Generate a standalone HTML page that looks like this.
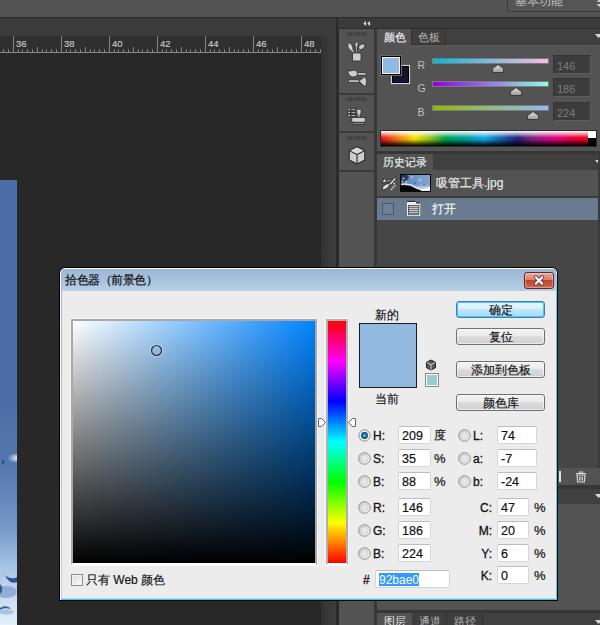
<!DOCTYPE html>
<html><head><meta charset="utf-8">
<style>
*{margin:0;padding:0;box-sizing:border-box}
html,body{width:600px;height:625px;overflow:hidden;background:#282828;font-family:"Liberation Sans",sans-serif;}
.a{position:absolute}
.t{white-space:nowrap;line-height:1}
.d{-webkit-text-stroke:0.25px currentColor}
</style></head><body>
<div class="a" style="left:0;top:0;width:600px;height:625px;overflow:hidden">

<div class="a" style="left:0px;top:0px;width:600px;height:17px;background:#535353"></div>
<div class="a" style="left:0px;top:17px;width:600px;height:1px;background:#2a2a2a"></div>
<div class="a" style="left:507px;top:-3px;width:100px;height:15px;background:#555555;border:1px solid #3a3a3a;border-radius:0 0 0 3px"></div>
<div class="a t" style="left:515px;top:-4px;font-size:11.5px;color:#c0c0c0">基本功能</div>
<svg class="a" style="left:596px;top:-2px" width="8" height="10"><path d="M0.5 4L3.5 1L6.5 4Z M0.5 6L3.5 9L6.5 6Z" fill="#cccccc"/></svg>
<div class="a" style="left:0px;top:18px;width:336px;height:18px;background:#3b3b3b"></div>
<div class="a" style="left:0px;top:36px;width:321px;height:17px;background:#2f2f2f"></div>
<svg class="a" style="left:0;top:36px" width="321" height="17"><rect x="3" y="13.3" width="1" height="3" fill="#858585"/><rect x="8" y="13.3" width="1" height="3" fill="#858585"/><rect x="13" y="0.5" width="1" height="16" fill="#858585"/><rect x="18" y="13.3" width="1" height="3" fill="#858585"/><rect x="22" y="13.3" width="1" height="3" fill="#858585"/><rect x="27" y="13.3" width="1" height="3" fill="#858585"/><rect x="32" y="13.3" width="1" height="3" fill="#858585"/><rect x="37" y="11" width="1" height="5" fill="#858585"/><rect x="42" y="13.3" width="1" height="3" fill="#858585"/><rect x="46" y="13.3" width="1" height="3" fill="#858585"/><rect x="51" y="13.3" width="1" height="3" fill="#858585"/><rect x="56" y="13.3" width="1" height="3" fill="#858585"/><rect x="61" y="0.5" width="1" height="16" fill="#858585"/><rect x="66" y="13.3" width="1" height="3" fill="#858585"/><rect x="70" y="13.3" width="1" height="3" fill="#858585"/><rect x="75" y="13.3" width="1" height="3" fill="#858585"/><rect x="80" y="13.3" width="1" height="3" fill="#858585"/><rect x="85" y="11" width="1" height="5" fill="#858585"/><rect x="90" y="13.3" width="1" height="3" fill="#858585"/><rect x="94" y="13.3" width="1" height="3" fill="#858585"/><rect x="99" y="13.3" width="1" height="3" fill="#858585"/><rect x="104" y="13.3" width="1" height="3" fill="#858585"/><rect x="109" y="0.5" width="1" height="16" fill="#858585"/><rect x="114" y="13.3" width="1" height="3" fill="#858585"/><rect x="118" y="13.3" width="1" height="3" fill="#858585"/><rect x="123" y="13.3" width="1" height="3" fill="#858585"/><rect x="128" y="13.3" width="1" height="3" fill="#858585"/><rect x="133" y="11" width="1" height="5" fill="#858585"/><rect x="138" y="13.3" width="1" height="3" fill="#858585"/><rect x="142" y="13.3" width="1" height="3" fill="#858585"/><rect x="147" y="13.3" width="1" height="3" fill="#858585"/><rect x="152" y="13.3" width="1" height="3" fill="#858585"/><rect x="157" y="0.5" width="1" height="16" fill="#858585"/><rect x="162" y="13.3" width="1" height="3" fill="#858585"/><rect x="166" y="13.3" width="1" height="3" fill="#858585"/><rect x="171" y="13.3" width="1" height="3" fill="#858585"/><rect x="176" y="13.3" width="1" height="3" fill="#858585"/><rect x="181" y="11" width="1" height="5" fill="#858585"/><rect x="186" y="13.3" width="1" height="3" fill="#858585"/><rect x="190" y="13.3" width="1" height="3" fill="#858585"/><rect x="195" y="13.3" width="1" height="3" fill="#858585"/><rect x="200" y="13.3" width="1" height="3" fill="#858585"/><rect x="205" y="0.5" width="1" height="16" fill="#858585"/><rect x="210" y="13.3" width="1" height="3" fill="#858585"/><rect x="214" y="13.3" width="1" height="3" fill="#858585"/><rect x="219" y="13.3" width="1" height="3" fill="#858585"/><rect x="224" y="13.3" width="1" height="3" fill="#858585"/><rect x="229" y="11" width="1" height="5" fill="#858585"/><rect x="234" y="13.3" width="1" height="3" fill="#858585"/><rect x="238" y="13.3" width="1" height="3" fill="#858585"/><rect x="243" y="13.3" width="1" height="3" fill="#858585"/><rect x="248" y="13.3" width="1" height="3" fill="#858585"/><rect x="253" y="0.5" width="1" height="16" fill="#858585"/><rect x="258" y="13.3" width="1" height="3" fill="#858585"/><rect x="262" y="13.3" width="1" height="3" fill="#858585"/><rect x="267" y="13.3" width="1" height="3" fill="#858585"/><rect x="272" y="13.3" width="1" height="3" fill="#858585"/><rect x="277" y="11" width="1" height="5" fill="#858585"/><rect x="282" y="13.3" width="1" height="3" fill="#858585"/><rect x="286" y="13.3" width="1" height="3" fill="#858585"/><rect x="291" y="13.3" width="1" height="3" fill="#858585"/><rect x="296" y="13.3" width="1" height="3" fill="#858585"/><rect x="301" y="0.5" width="1" height="16" fill="#858585"/><rect x="306" y="13.3" width="1" height="3" fill="#858585"/><rect x="310" y="13.3" width="1" height="3" fill="#858585"/><rect x="315" y="13.3" width="1" height="3" fill="#858585"/><rect x="320" y="13.3" width="1" height="3" fill="#858585"/><rect x="0" y="16" width="321" height="1" fill="#858585"/></svg>
<div class="a t" style="left:16px;top:38.5px;font-size:9.5px;color:#cacaca;-webkit-text-stroke:0.15px #cacaca">36</div>
<div class="a t" style="left:64px;top:38.5px;font-size:9.5px;color:#cacaca;-webkit-text-stroke:0.15px #cacaca">38</div>
<div class="a t" style="left:112px;top:38.5px;font-size:9.5px;color:#cacaca;-webkit-text-stroke:0.15px #cacaca">40</div>
<div class="a t" style="left:160px;top:38.5px;font-size:9.5px;color:#cacaca;-webkit-text-stroke:0.15px #cacaca">42</div>
<div class="a t" style="left:208px;top:38.5px;font-size:9.5px;color:#cacaca;-webkit-text-stroke:0.15px #cacaca">44</div>
<div class="a t" style="left:256px;top:38.5px;font-size:9.5px;color:#cacaca;-webkit-text-stroke:0.15px #cacaca">46</div>
<div class="a t" style="left:304px;top:38.5px;font-size:9.5px;color:#cacaca;-webkit-text-stroke:0.15px #cacaca">48</div>
<div class="a" style="left:321px;top:36px;width:15px;height:589px;background:linear-gradient(90deg,#323232,#3e3e3e)"></div>
<div class="a" style="left:336px;top:18px;width:3px;height:607px;background:#2a2a2a"></div>
<svg class="a" style="left:0;top:180px" width="17" height="445"><defs><linearGradient id="cv" x1="0" y1="0" x2="0" y2="1"><stop offset="0" stop-color="#4a6fa8"/><stop offset="0.5" stop-color="#4a6fa8"/><stop offset="0.65" stop-color="#5479b0"/><stop offset="0.78" stop-color="#7498c8"/><stop offset="0.86" stop-color="#a0c0e4"/><stop offset="0.93" stop-color="#c4daf0"/><stop offset="1" stop-color="#e4f0fa"/></linearGradient><radialGradient id="hl" cx="0.8" cy="0.5" r="0.6"><stop offset="0" stop-color="#ffffff"/><stop offset="1" stop-color="#ffffff" stop-opacity="0"/></radialGradient></defs><rect width="17" height="445" fill="url(#cv)"/><ellipse cx="13" cy="278" rx="9" ry="4.5" fill="url(#hl)"/><path d="M2 279L5 282L2 285Z" fill="#20345a" opacity="0.6"/><path d="M5 395C9 399 14 399 17 397V402C13 404 8 402 5 395Z" fill="#1c3a8c" opacity="0.85"/><ellipse cx="6" cy="412" rx="11" ry="6" fill="#6f93c4" opacity="0.6"/><path d="M0 404C3 406 3 412 0 414Z" fill="#24427a" opacity="0.8"/><path d="M0 428C4 425 9 426 11 429C7 428 3 428 0 430Z" fill="#1c3a8c" opacity="0.8"/><ellipse cx="6" cy="432" rx="8" ry="2.5" fill="#7e9fcc" opacity="0.5"/></svg>
<div class="a" style="left:338px;top:18px;width:262px;height:10px;background:#3b3b3b"></div>
<div class="a" style="left:338px;top:28px;width:262px;height:1px;background:#2c2c2c"></div>
<svg class="a" style="left:360px;top:18px" width="14" height="10"><path d="M6.5 2L2.8 5.5L6.5 9Z M10.5 2L6.8 5.5L10.5 9Z" fill="#dadada" stroke="#1e1e1e" stroke-width="0.7" stroke-linejoin="round"/></svg>
<div class="a" style="left:339px;top:29px;width:35px;height:596px;background:#535353"></div>
<div class="a" style="left:374px;top:29px;width:3px;height:596px;background:#383838"></div>
<div class="a" style="left:377px;top:29px;width:223px;height:596px;background:#535353"></div>
<div class="a" style="left:377px;top:29px;width:223px;height:16px;background:#404040"></div>
<div class="a" style="left:377px;top:45px;width:223px;height:1px;background:#5a5a5a"></div>
<div class="a" style="left:377px;top:29px;width:34px;height:17px;background:#535353"></div>
<div class="a t" style="left:384px;top:32px;font-size:11px;color:#f0f0f0;-webkit-text-stroke:0.15px #f0f0f0">颜色</div>
<div class="a" style="left:411px;top:29px;width:35px;height:16px;background:#3e3e3e;border:1px solid #323232;border-top:none"></div>
<div class="a t" style="left:418px;top:32px;font-size:11px;color:#b4b4b4">色板</div>
<svg class="a" style="left:595px;top:34px" width="8" height="5"><path d="M0 0H7L3.5 4Z" fill="#d8d8d8"/></svg>
<div class="a" style="left:391px;top:65px;width:19px;height:19px;background:#15142a;border:1px solid #d8d8d8;box-shadow:inset 0 0 0 1px #000,0 0 0 1px #5e5e5e"></div>
<div class="a" style="left:380px;top:55px;width:22px;height:21px;background:#92bae0;border:1px solid #6a6a6a;box-shadow:inset 0 0 0 1px #000,inset 0 0 0 2px #f4f4f4"></div>
<div class="a t" style="left:417.5px;top:59.8px;font-size:10.5px;color:#c0c0c0">R</div>
<div class="a" style="left:432px;top:58px;width:117px;height:6px;background:linear-gradient(90deg,rgb(0,186,224),rgb(255,186,224));border:1px solid #7a7a7a"></div>
<svg class="a" style="left:492px;top:64px" width="12" height="9"><defs><linearGradient id="tgR" x1="0" y1="0" x2="0" y2="1"><stop offset="0" stop-color="#e0e0e0"/><stop offset="1" stop-color="#9a9a9a"/></linearGradient></defs><path d="M0.5 8.5V4.5L6 0.5L11.5 4.5V8.5Z" fill="url(#tgR)" stroke="#3a3a3a" stroke-width="1"/></svg>
<div class="a" style="left:553px;top:55px;width:38px;height:19px;background:#3c3c3c;border:1px solid #323232;border-bottom-color:#5e5e5e;border-right-color:#5a5a5a"></div>
<div class="a t" style="left:557px;top:60.5px;font-size:11px;color:#7c7c7c">146</div>
<div class="a t" style="left:417.5px;top:82.8px;font-size:10.5px;color:#c0c0c0">G</div>
<div class="a" style="left:432px;top:81px;width:117px;height:6px;background:linear-gradient(90deg,rgb(146,0,224),rgb(146,255,224));border:1px solid #7a7a7a"></div>
<svg class="a" style="left:510px;top:87px" width="12" height="9"><defs><linearGradient id="tgG" x1="0" y1="0" x2="0" y2="1"><stop offset="0" stop-color="#e0e0e0"/><stop offset="1" stop-color="#9a9a9a"/></linearGradient></defs><path d="M0.5 8.5V4.5L6 0.5L11.5 4.5V8.5Z" fill="url(#tgG)" stroke="#3a3a3a" stroke-width="1"/></svg>
<div class="a" style="left:553px;top:78px;width:38px;height:19px;background:#3c3c3c;border:1px solid #323232;border-bottom-color:#5e5e5e;border-right-color:#5a5a5a"></div>
<div class="a t" style="left:557px;top:83.5px;font-size:11px;color:#7c7c7c">186</div>
<div class="a t" style="left:417.5px;top:106.8px;font-size:10.5px;color:#c0c0c0">B</div>
<div class="a" style="left:432px;top:105px;width:117px;height:6px;background:linear-gradient(90deg,rgb(146,186,0),rgb(146,186,255));border:1px solid #7a7a7a"></div>
<svg class="a" style="left:527px;top:111px" width="12" height="9"><defs><linearGradient id="tgB" x1="0" y1="0" x2="0" y2="1"><stop offset="0" stop-color="#e0e0e0"/><stop offset="1" stop-color="#9a9a9a"/></linearGradient></defs><path d="M0.5 8.5V4.5L6 0.5L11.5 4.5V8.5Z" fill="url(#tgB)" stroke="#3a3a3a" stroke-width="1"/></svg>
<div class="a" style="left:553px;top:102px;width:38px;height:19px;background:#3c3c3c;border:1px solid #323232;border-bottom-color:#5e5e5e;border-right-color:#5a5a5a"></div>
<div class="a t" style="left:557px;top:107.5px;font-size:11px;color:#7c7c7c">224</div>
<div class="a" style="left:380px;top:130px;width:217px;height:17px;background:#2a2a2a"></div>
<div class="a" style="left:381px;top:131px;width:207px;height:15px;background:linear-gradient(180deg,rgba(255,255,255,1) 0%,rgba(255,255,255,0) 45%,rgba(0,0,0,0) 55%,rgba(0,0,0,1) 100%),linear-gradient(90deg,#e8101c 0%,#f07818 8%,#f4e400 16.4%,#8cc020 24%,#00a048 31%,#00a0a0 42%,#10a8e4 50%,#1c3c90 62%,#24207a 66%,#80207e 73%,#e0007c 84%,#e8002c 95%,#e4101c 100%)"></div>
<div class="a" style="left:588px;top:131px;width:8px;height:7px;background:#fff"></div>
<div class="a" style="left:588px;top:138px;width:8px;height:8px;background:#000"></div>
<div class="a" style="left:377px;top:151px;width:223px;height:3px;background:#363636"></div>
<div class="a" style="left:377px;top:154px;width:223px;height:16px;background:#404040"></div>
<div class="a" style="left:377px;top:154px;width:56px;height:16px;background:#535353"></div>
<div class="a t" style="left:383px;top:157px;font-size:11px;color:#f0f0f0;-webkit-text-stroke:0.15px #f0f0f0">历史记录</div>
<svg class="a" style="left:595px;top:160px" width="8" height="5"><path d="M0 0H7L3.5 4Z" fill="#d8d8d8"/></svg>
<div class="a" style="left:377px;top:170px;width:223px;height:26px;background:#535353"></div>
<div class="a" style="left:377px;top:196px;width:223px;height:2px;background:#3a3a3a"></div>
<div class="a" style="left:377px;top:198px;width:223px;height:22px;background:#6a7a8f"></div>
<div class="a" style="left:377px;top:220px;width:223px;height:248px;background:#464646"></div>
<div class="a" style="left:598px;top:154px;width:2px;height:314px;background:#3a3a3a"></div>
<div class="a t" style="left:436px;top:177px;font-size:12px;color:#ececec;-webkit-text-stroke:0.15px #ececec">吸管工具.jpg</div>
<div class="a t" style="left:432px;top:203px;font-size:12px;color:#f4f4f4;-webkit-text-stroke:0.2px #f4f4f4">打开</div>
<svg class="a" style="left:400px;top:174px" width="31" height="18"><defs><linearGradient id="th" x1="0" y1="0" x2="1" y2="0"><stop offset="0" stop-color="#3a5886"/><stop offset="0.3" stop-color="#6a8fc0"/><stop offset="1" stop-color="#82a6d0"/></linearGradient><radialGradient id="th3" cx="0.75" cy="1" r="0.45"><stop offset="0" stop-color="#e8f0fa"/><stop offset="1" stop-color="#e8f0fa" stop-opacity="0"/></radialGradient><filter id="bl" x="-0.2" y="-0.2" width="1.4" height="1.4"><feGaussianBlur stdDeviation="0.5"/></filter></defs><rect x="0" y="0" width="31" height="18" fill="#080808"/><rect x="1" y="1" width="29" height="16" fill="url(#th)"/><rect x="1" y="1" width="29" height="16" fill="url(#th3)"/><g filter="url(#bl)"><path d="M1 1H7L9 3L7 6L4 8L1 9Z" fill="#1a2a48" opacity="0.8"/><circle cx="3.5" cy="4.5" r="1" fill="#b8d0ec"/><circle cx="2.5" cy="7.5" r="1" fill="#a8c4e4"/><circle cx="6" cy="8" r="1.2" fill="#9ab8dc"/><circle cx="12" cy="3" r="1.5" fill="#a8c4e6" opacity="0.8"/><circle cx="20" cy="6" r="2" fill="#9fbee2" opacity="0.7"/><circle cx="15" cy="9" r="1" fill="#3a5a8a" opacity="0.7"/><circle cx="24" cy="11" r="1" fill="#4a6a9a" opacity="0.7"/><path d="M1 10.5C4 9.5 7 10.5 9 10.5C11.5 10.5 13 12 15 13C17 14 19 14.5 21 15" fill="none" stroke="#dbe8f6" stroke-width="1.5"/></g><path d="M1 11.5C3 10.8 6 11.5 8.5 11.8C11 12 13 13.2 15 14.2C17 15.2 19 15.8 21 16.2V17H1Z" fill="#050505"/><path d="M20.5 16C23 14.5 26 14 30 12.5V17H21Z" fill="#f2f6fb"/></svg>
<div class="a" style="left:382px;top:203px;width:12px;height:12px;background:#6f8099;border:1px solid #4a5566"></div>
<svg class="a" style="left:406px;top:200px" width="16" height="17"><rect x="1" y="2" width="13.2" height="13.8" fill="#eeeeee"/><rect x="10" y="2" width="4.2" height="1.6" fill="#3c4a5e"/><rect x="1" y="0.8" width="8.5" height="1.2" fill="#333"/><rect x="2" y="5" width="11.2" height="9.8" fill="#585858"/><rect x="3" y="6.2" width="9.2" height="1" fill="#e4e4e4"/><rect x="3" y="8.2" width="9.2" height="1" fill="#e4e4e4"/><rect x="3" y="10.2" width="9.2" height="1" fill="#e4e4e4"/><rect x="3" y="12.2" width="9.2" height="1" fill="#e4e4e4"/></svg>
<svg class="a" style="left:378px;top:174px" width="22" height="20"><g stroke="#222" stroke-width="0.9" stroke-linejoin="round"><path d="M6.2 4.4L3.8 9L9.2 7.8Z" fill="#e4e4e4"/><path d="M8 7.6C9.5 5.8 11.5 5 14 5.2L13.8 6.8C11.8 6.6 10.2 7.2 9 8.4Z" fill="#e4e4e4"/><path d="M16.8 3.4L18.4 4.8L12.6 11.4L10.8 10Z" fill="#e6e6e6"/><path d="M11.8 10.6C11 12.8 9.4 14.4 7.2 15.3C6.2 15.7 5 15.9 3.9 15.9C4.2 13.4 5.6 11.2 8 10.2C9.2 9.7 10.2 9.4 10.9 9.6Z" fill="#dadada"/></g><circle cx="16.1" cy="9.6" r="0.9" fill="#d0d0d0"/><circle cx="16.9" cy="11.8" r="0.9" fill="#d0d0d0"/><circle cx="15" cy="13.4" r="0.9" fill="#d0d0d0"/><circle cx="13.5" cy="15.4" r="0.9" fill="#d0d0d0"/></svg>
<div class="a" style="left:377px;top:468px;width:223px;height:17px;background:#535353"></div>
<svg class="a" style="left:575px;top:471px" width="12" height="12"><path d="M1 2.5H11M4.5 2.5V1H7.5V2.5" stroke="#d8d8d8" stroke-width="1.2" fill="none"/><path d="M2 4H10L9.3 11H2.7Z" fill="none" stroke="#d8d8d8" stroke-width="1.2"/><path d="M4.5 5.5V9.5M6 5.5V9.5M7.5 5.5V9.5" stroke="#d8d8d8" stroke-width="0.9"/></svg>
<div class="a" style="left:559px;top:471px;width:2px;height:11px;background:#e0e0e0"></div>
<div class="a" style="left:377px;top:485px;width:223px;height:4px;background:#363636"></div>
<div class="a" style="left:377px;top:489px;width:223px;height:15px;background:#404040"></div>
<svg class="a" style="left:595px;top:494px" width="8" height="5"><path d="M0 0H7L3.5 4Z" fill="#d8d8d8"/></svg>
<div class="a" style="left:377px;top:504px;width:223px;height:106px;background:#535353"></div>
<div class="a" style="left:377px;top:610px;width:223px;height:3px;background:#363636"></div>
<div class="a" style="left:377px;top:613px;width:223px;height:12px;background:#404040"></div>
<div class="a" style="left:377px;top:613px;width:35px;height:12px;background:#535353"></div>
<div class="a" style="left:412px;top:613px;width:35px;height:12px;background:#3e3e3e;border-right:1px solid #323232"></div>
<div class="a" style="left:447px;top:613px;width:36px;height:12px;background:#3e3e3e;border-right:1px solid #323232"></div>
<div class="a t" style="left:384px;top:616px;font-size:11px;color:#e6e6e6">图层</div>
<div class="a t" style="left:419px;top:616px;font-size:11px;color:#b4b4b4">通道</div>
<div class="a t" style="left:454px;top:616px;font-size:11px;color:#b4b4b4">路径</div>
<svg class="a" style="left:595px;top:620px" width="8" height="5"><path d="M0 0H7L3.5 4Z" fill="#d8d8d8"/></svg>
<div class="a" style="left:339px;top:93px;width:35px;height:2px;background:#3a3a3a"></div>
<div class="a" style="left:339px;top:131px;width:35px;height:2px;background:#3a3a3a"></div>
<div class="a" style="left:339px;top:170px;width:35px;height:2px;background:#3a3a3a"></div>
<svg class="a" style="left:346px;top:32px" width="20" height="5"><rect x="1" y="0" width="1" height="4" fill="#3a3a3a"/><rect x="3" y="0" width="1" height="4" fill="#3a3a3a"/><rect x="5" y="0" width="1" height="4" fill="#3a3a3a"/><rect x="7" y="0" width="1" height="4" fill="#3a3a3a"/><rect x="9" y="0" width="1" height="4" fill="#3a3a3a"/><rect x="11" y="0" width="1" height="4" fill="#3a3a3a"/><rect x="13" y="0" width="1" height="4" fill="#3a3a3a"/><rect x="15" y="0" width="1" height="4" fill="#3a3a3a"/><rect x="17" y="0" width="1" height="4" fill="#3a3a3a"/><rect x="19" y="0" width="1" height="4" fill="#3a3a3a"/></svg>
<svg class="a" style="left:346px;top:97px" width="20" height="5"><rect x="1" y="0" width="1" height="4" fill="#3a3a3a"/><rect x="3" y="0" width="1" height="4" fill="#3a3a3a"/><rect x="5" y="0" width="1" height="4" fill="#3a3a3a"/><rect x="7" y="0" width="1" height="4" fill="#3a3a3a"/><rect x="9" y="0" width="1" height="4" fill="#3a3a3a"/><rect x="11" y="0" width="1" height="4" fill="#3a3a3a"/><rect x="13" y="0" width="1" height="4" fill="#3a3a3a"/><rect x="15" y="0" width="1" height="4" fill="#3a3a3a"/><rect x="17" y="0" width="1" height="4" fill="#3a3a3a"/><rect x="19" y="0" width="1" height="4" fill="#3a3a3a"/></svg>
<svg class="a" style="left:346px;top:136px" width="20" height="5"><rect x="1" y="0" width="1" height="4" fill="#3a3a3a"/><rect x="3" y="0" width="1" height="4" fill="#3a3a3a"/><rect x="5" y="0" width="1" height="4" fill="#3a3a3a"/><rect x="7" y="0" width="1" height="4" fill="#3a3a3a"/><rect x="9" y="0" width="1" height="4" fill="#3a3a3a"/><rect x="11" y="0" width="1" height="4" fill="#3a3a3a"/><rect x="13" y="0" width="1" height="4" fill="#3a3a3a"/><rect x="15" y="0" width="1" height="4" fill="#3a3a3a"/><rect x="17" y="0" width="1" height="4" fill="#3a3a3a"/><rect x="19" y="0" width="1" height="4" fill="#3a3a3a"/></svg>
<div class="a" style="left:59px;top:267px;width:499px;height:334px;background:#000;border-radius:6px 6px 0 0"></div>
<div class="a" style="left:60px;top:268px;width:497px;height:332px;background:#fff;border-radius:5px 5px 0 0"></div>
<div class="a" style="left:61px;top:269px;width:495px;height:331px;background:linear-gradient(180deg,#9ab6d4 0%,#b6cee6 100%);border-radius:4px 4px 0 0"></div>
<div class="a" style="left:62px;top:269px;width:494px;height:22px;background:linear-gradient(180deg,#9bb6d4 0%,#a8c1dc 50%,#b8cfe7 100%)"></div>
<div class="a" style="left:556px;top:274px;width:1px;height:326px;background:linear-gradient(180deg,#a8d8f0 0%,#4ad2f0 8%,#4ad2f0 100%)"></div>
<div class="a" style="left:61px;top:598px;width:496px;height:1px;background:#a6def2"></div>
<div class="a" style="left:61px;top:599px;width:496px;height:1px;background:#38c6ec"></div>
<div class="a" style="left:62px;top:291px;width:494px;height:307px;background:#ececec"></div>
<div class="a t" style="left:65px;top:274px;font-size:12px;color:#101010;letter-spacing:-0.5px;-webkit-text-stroke:0.2px #101010">拾色器（前景色）</div>
<svg class="a" style="left:524px;top:272px" width="30" height="17"><defs><linearGradient id="cb" x1="0" y1="0" x2="0" y2="1"><stop offset="0" stop-color="#eab0a4"/><stop offset="0.45" stop-color="#d8806c"/><stop offset="0.5" stop-color="#c2432a"/><stop offset="1" stop-color="#d46a50"/></linearGradient></defs><rect x="0.5" y="0.5" width="29" height="16" rx="2.5" fill="url(#cb)" stroke="#5a2a2a"/><rect x="1.5" y="1.5" width="27" height="14" rx="2" fill="none" stroke="rgba(255,255,255,0.35)"/><path d="M11.8 5.2L18.2 11.6M18.2 5.2L11.8 11.6" stroke="#4a3a4a" stroke-width="3.9" stroke-linecap="round"/><path d="M11.8 5.2L18.2 11.6M18.2 5.2L11.8 11.6" stroke="#fafafa" stroke-width="2.2" stroke-linecap="round"/></svg>
<div class="a" style="left:70px;top:318px;width:248px;height:248px;background:#f6f6f6"></div>
<div class="a" style="left:71px;top:319px;width:246px;height:246px;background:#fff;border:2px solid #a8a8a8;border-bottom-color:#fff"></div>
<div class="a" style="left:73px;top:321px;width:242px;height:242px;background:linear-gradient(180deg,rgba(0,0,0,0),#000),linear-gradient(90deg,#fff,rgb(0,132,255))"></div>
<svg class="a" style="left:148px;top:342px" width="18" height="18"><circle cx="8.5" cy="8.5" r="5" fill="none" stroke="#2a2a2a" stroke-width="1.2"/><circle cx="8.5" cy="8.5" r="6.2" fill="none" stroke="rgba(255,255,255,0.35)" stroke-width="1"/></svg>
<div class="a" style="left:325px;top:318px;width:24px;height:248px;background:#f6f6f6"></div>
<div class="a" style="left:326px;top:319px;width:22px;height:246px;background:#fff;border:2px solid #a8b0b0;border-bottom-color:#fff"></div>
<div class="a" style="left:328px;top:321px;width:18px;height:242px;background:linear-gradient(180deg,#f00 0%,#f0f 16.67%,#00f 33.33%,#0ff 50%,#0f0 66.67%,#ff0 83.33%,#f00 100%)"></div>
<svg class="a" style="left:317px;top:417px" width="10" height="11"><path d="M2 1.5H4.5L8.6 5.5L4.5 9.5H2Q1.5 9.5 1.5 9V2Q1.5 1.5 2 1.5Z" fill="#fff" stroke="#606060" stroke-width="1" stroke-linejoin="round"/></svg>
<svg class="a" style="left:347px;top:417px" width="10" height="11"><path d="M8 1.5H5.5L1.4 5.5L5.5 9.5H8Q8.5 9.5 8.5 9V2Q8.5 1.5 8 1.5Z" fill="#fff" stroke="#606060" stroke-width="1" stroke-linejoin="round"/></svg>
<div class="a t" style="left:375px;top:309px;font-size:12px;color:#111;-webkit-text-stroke:0.15px #111">新的</div>
<div class="a" style="left:359px;top:323px;width:58px;height:65px;background:#92bae0;border:1px solid #1a1a1a"></div>
<div class="a t" style="left:375px;top:393px;font-size:12px;color:#111;-webkit-text-stroke:0.15px #111">当前</div>
<svg class="a" style="left:425px;top:359px" width="12" height="12"><path d="M6 1L10.5 3.3V8.7L6 11L1.5 8.7V3.3Z" fill="#555" stroke="#222" stroke-width="1"/><path d="M1.8 3.5L6 5.6L10.2 3.5M6 5.6V10.8" fill="none" stroke="#ddd" stroke-width="0.9"/></svg>
<div class="a" style="left:425px;top:373px;width:14px;height:14px;background:#99cccc;border:1px solid #8a8a8a;box-shadow:inset 0 0 0 1px #fff"></div>
<div class="a" style="left:456px;top:301px;width:89px;height:17px;border:1px solid #3c7fb1;border-radius:3px;background:linear-gradient(180deg,#eaf6fd 0%,#d9f0fc 45%,#bee6fd 50%,#a7d9f5 100%);box-shadow:inset 0 0 0 1px #48c8f8"></div>
<div class="a t" style="left:456px;top:304px;width:89px;text-align:center;font-size:12px;color:#111;-webkit-text-stroke:0.15px #111">确定</div>
<div class="a" style="left:456px;top:328px;width:89px;height:17px;border:1px solid #707070;border-radius:3px;background:linear-gradient(180deg,#f2f2f2 0%,#ebebeb 45%,#dddddd 50%,#cfcfcf 100%);box-shadow:inset 0 0 0 1px rgba(255,255,255,0.6)"></div>
<div class="a t" style="left:456px;top:331px;width:89px;text-align:center;font-size:12px;color:#111;-webkit-text-stroke:0.15px #111">复位</div>
<div class="a" style="left:456px;top:361px;width:89px;height:17px;border:1px solid #707070;border-radius:3px;background:linear-gradient(180deg,#f2f2f2 0%,#ebebeb 45%,#dddddd 50%,#cfcfcf 100%);box-shadow:inset 0 0 0 1px rgba(255,255,255,0.6)"></div>
<div class="a t" style="left:456px;top:364px;width:89px;text-align:center;font-size:12px;color:#111;-webkit-text-stroke:0.15px #111">添加到色板</div>
<div class="a" style="left:456px;top:394px;width:89px;height:17px;border:1px solid #707070;border-radius:3px;background:linear-gradient(180deg,#f2f2f2 0%,#ebebeb 45%,#dddddd 50%,#cfcfcf 100%);box-shadow:inset 0 0 0 1px rgba(255,255,255,0.6)"></div>
<div class="a t" style="left:456px;top:397px;width:89px;text-align:center;font-size:12px;color:#111;-webkit-text-stroke:0.15px #111">颜色库</div>
<svg class="a" style="left:358px;top:429px" width="13" height="13"><defs><radialGradient id="rg" cx="0.5" cy="0.5" r="0.5"><stop offset="0" stop-color="#6fd4ff"/><stop offset="0.45" stop-color="#1a8ad0"/><stop offset="1" stop-color="#0c3050"/></radialGradient></defs><circle cx="6.5" cy="6.5" r="5.6" fill="#f2f2f2" stroke="#8a8a8a" stroke-width="1"/><circle cx="6.5" cy="6.5" r="3.4" fill="url(#rg)"/></svg>
<div class="a t" style="left:373px;top:430px;font-size:12px;color:#111;-webkit-text-stroke:0.3px #111">H:</div>
<div class="a" style="left:398px;top:426px;width:33px;height:18px;background:#fff;border:1px solid #d6d6d6;border-top-color:#bcbcbc;border-radius:2px"></div>
<div class="a t" style="left:402px;top:430px;font-size:12.5px;color:#111;-webkit-text-stroke:0.2px #111">209</div>
<div class="a t" style="left:434px;top:429px;font-size:12px;color:#111;-webkit-text-stroke:0.15px #111">度</div>
<svg class="a" style="left:358px;top:452px" width="13" height="13"><defs><linearGradient id="rl" x1="0" y1="0" x2="1" y2="1"><stop offset="0" stop-color="#c8c8c8"/><stop offset="1" stop-color="#fafafa"/></linearGradient></defs><circle cx="6.5" cy="6.5" r="5.8" fill="url(#rl)" stroke="#8a8a8a" stroke-width="0.9"/><circle cx="6.5" cy="6.5" r="3.6" fill="#e6e6e6" stroke="#c4c4c4" stroke-width="0.6"/></svg>
<div class="a t" style="left:373px;top:453px;font-size:12px;color:#111;-webkit-text-stroke:0.3px #111">S:</div>
<div class="a" style="left:398px;top:449px;width:33px;height:18px;background:#fff;border:1px solid #d6d6d6;border-top-color:#bcbcbc;border-radius:2px"></div>
<div class="a t" style="left:402px;top:453px;font-size:12.5px;color:#111;-webkit-text-stroke:0.2px #111">35</div>
<div class="a t" style="left:434px;top:452px;font-size:13px;color:#111;-webkit-text-stroke:0.2px #111">%</div>
<svg class="a" style="left:358px;top:475px" width="13" height="13"><defs><linearGradient id="rl" x1="0" y1="0" x2="1" y2="1"><stop offset="0" stop-color="#c8c8c8"/><stop offset="1" stop-color="#fafafa"/></linearGradient></defs><circle cx="6.5" cy="6.5" r="5.8" fill="url(#rl)" stroke="#8a8a8a" stroke-width="0.9"/><circle cx="6.5" cy="6.5" r="3.6" fill="#e6e6e6" stroke="#c4c4c4" stroke-width="0.6"/></svg>
<div class="a t" style="left:373px;top:476px;font-size:12px;color:#111;-webkit-text-stroke:0.3px #111">B:</div>
<div class="a" style="left:398px;top:472px;width:33px;height:18px;background:#fff;border:1px solid #d6d6d6;border-top-color:#bcbcbc;border-radius:2px"></div>
<div class="a t" style="left:402px;top:476px;font-size:12.5px;color:#111;-webkit-text-stroke:0.2px #111">88</div>
<div class="a t" style="left:434px;top:475px;font-size:13px;color:#111;-webkit-text-stroke:0.2px #111">%</div>
<svg class="a" style="left:458px;top:429px" width="13" height="13"><defs><linearGradient id="rl" x1="0" y1="0" x2="1" y2="1"><stop offset="0" stop-color="#c8c8c8"/><stop offset="1" stop-color="#fafafa"/></linearGradient></defs><circle cx="6.5" cy="6.5" r="5.8" fill="url(#rl)" stroke="#8a8a8a" stroke-width="0.9"/><circle cx="6.5" cy="6.5" r="3.6" fill="#e6e6e6" stroke="#c4c4c4" stroke-width="0.6"/></svg>
<div class="a t" style="left:473px;top:430px;font-size:12px;color:#111;-webkit-text-stroke:0.3px #111">L:</div>
<div class="a" style="left:497px;top:426px;width:40px;height:18px;background:#fff;border:1px solid #d6d6d6;border-top-color:#bcbcbc;border-radius:2px"></div>
<div class="a t" style="left:501px;top:430px;font-size:12.5px;color:#111;-webkit-text-stroke:0.2px #111">74</div>
<svg class="a" style="left:458px;top:452px" width="13" height="13"><defs><linearGradient id="rl" x1="0" y1="0" x2="1" y2="1"><stop offset="0" stop-color="#c8c8c8"/><stop offset="1" stop-color="#fafafa"/></linearGradient></defs><circle cx="6.5" cy="6.5" r="5.8" fill="url(#rl)" stroke="#8a8a8a" stroke-width="0.9"/><circle cx="6.5" cy="6.5" r="3.6" fill="#e6e6e6" stroke="#c4c4c4" stroke-width="0.6"/></svg>
<div class="a t" style="left:473px;top:453px;font-size:12px;color:#111;-webkit-text-stroke:0.3px #111">a:</div>
<div class="a" style="left:497px;top:449px;width:40px;height:18px;background:#fff;border:1px solid #d6d6d6;border-top-color:#bcbcbc;border-radius:2px"></div>
<div class="a t" style="left:501px;top:453px;font-size:12.5px;color:#111;-webkit-text-stroke:0.2px #111">-7</div>
<svg class="a" style="left:458px;top:475px" width="13" height="13"><defs><linearGradient id="rl" x1="0" y1="0" x2="1" y2="1"><stop offset="0" stop-color="#c8c8c8"/><stop offset="1" stop-color="#fafafa"/></linearGradient></defs><circle cx="6.5" cy="6.5" r="5.8" fill="url(#rl)" stroke="#8a8a8a" stroke-width="0.9"/><circle cx="6.5" cy="6.5" r="3.6" fill="#e6e6e6" stroke="#c4c4c4" stroke-width="0.6"/></svg>
<div class="a t" style="left:473px;top:476px;font-size:12px;color:#111;-webkit-text-stroke:0.3px #111">b:</div>
<div class="a" style="left:497px;top:472px;width:40px;height:18px;background:#fff;border:1px solid #d6d6d6;border-top-color:#bcbcbc;border-radius:2px"></div>
<div class="a t" style="left:501px;top:476px;font-size:12.5px;color:#111;-webkit-text-stroke:0.2px #111">-24</div>
<svg class="a" style="left:358px;top:501px" width="13" height="13"><defs><linearGradient id="rl" x1="0" y1="0" x2="1" y2="1"><stop offset="0" stop-color="#c8c8c8"/><stop offset="1" stop-color="#fafafa"/></linearGradient></defs><circle cx="6.5" cy="6.5" r="5.8" fill="url(#rl)" stroke="#8a8a8a" stroke-width="0.9"/><circle cx="6.5" cy="6.5" r="3.6" fill="#e6e6e6" stroke="#c4c4c4" stroke-width="0.6"/></svg>
<div class="a t" style="left:373px;top:502px;font-size:12px;color:#111;-webkit-text-stroke:0.3px #111">R:</div>
<div class="a" style="left:398px;top:498px;width:33px;height:18px;background:#fff;border:1px solid #d6d6d6;border-top-color:#bcbcbc;border-radius:2px"></div>
<div class="a t" style="left:402px;top:502px;font-size:12.5px;color:#111;-webkit-text-stroke:0.2px #111">146</div>
<svg class="a" style="left:358px;top:524px" width="13" height="13"><defs><linearGradient id="rl" x1="0" y1="0" x2="1" y2="1"><stop offset="0" stop-color="#c8c8c8"/><stop offset="1" stop-color="#fafafa"/></linearGradient></defs><circle cx="6.5" cy="6.5" r="5.8" fill="url(#rl)" stroke="#8a8a8a" stroke-width="0.9"/><circle cx="6.5" cy="6.5" r="3.6" fill="#e6e6e6" stroke="#c4c4c4" stroke-width="0.6"/></svg>
<div class="a t" style="left:373px;top:525px;font-size:12px;color:#111;-webkit-text-stroke:0.3px #111">G:</div>
<div class="a" style="left:398px;top:521px;width:33px;height:18px;background:#fff;border:1px solid #d6d6d6;border-top-color:#bcbcbc;border-radius:2px"></div>
<div class="a t" style="left:402px;top:525px;font-size:12.5px;color:#111;-webkit-text-stroke:0.2px #111">186</div>
<svg class="a" style="left:358px;top:547px" width="13" height="13"><defs><linearGradient id="rl" x1="0" y1="0" x2="1" y2="1"><stop offset="0" stop-color="#c8c8c8"/><stop offset="1" stop-color="#fafafa"/></linearGradient></defs><circle cx="6.5" cy="6.5" r="5.8" fill="url(#rl)" stroke="#8a8a8a" stroke-width="0.9"/><circle cx="6.5" cy="6.5" r="3.6" fill="#e6e6e6" stroke="#c4c4c4" stroke-width="0.6"/></svg>
<div class="a t" style="left:373px;top:548px;font-size:12px;color:#111;-webkit-text-stroke:0.3px #111">B:</div>
<div class="a" style="left:398px;top:544px;width:33px;height:18px;background:#fff;border:1px solid #d6d6d6;border-top-color:#bcbcbc;border-radius:2px"></div>
<div class="a t" style="left:402px;top:548px;font-size:12.5px;color:#111;-webkit-text-stroke:0.2px #111">224</div>
<div class="a t" style="left:440px;top:502px;width:52px;text-align:right;font-size:12px;color:#111;-webkit-text-stroke:0.3px #111">C:</div>
<div class="a" style="left:497px;top:498px;width:32px;height:18px;background:#fff;border:1px solid #d6d6d6;border-top-color:#bcbcbc;border-radius:2px"></div>
<div class="a t" style="left:501px;top:502px;font-size:12.5px;color:#111;-webkit-text-stroke:0.2px #111">47</div>
<div class="a t" style="left:534px;top:501px;font-size:13px;color:#111;-webkit-text-stroke:0.2px #111">%</div>
<div class="a t" style="left:440px;top:525px;width:52px;text-align:right;font-size:12px;color:#111;-webkit-text-stroke:0.3px #111">M:</div>
<div class="a" style="left:497px;top:521px;width:32px;height:18px;background:#fff;border:1px solid #d6d6d6;border-top-color:#bcbcbc;border-radius:2px"></div>
<div class="a t" style="left:501px;top:525px;font-size:12.5px;color:#111;-webkit-text-stroke:0.2px #111">20</div>
<div class="a t" style="left:534px;top:524px;font-size:13px;color:#111;-webkit-text-stroke:0.2px #111">%</div>
<div class="a t" style="left:440px;top:548px;width:52px;text-align:right;font-size:12px;color:#111;-webkit-text-stroke:0.3px #111">Y:</div>
<div class="a" style="left:497px;top:544px;width:32px;height:18px;background:#fff;border:1px solid #d6d6d6;border-top-color:#bcbcbc;border-radius:2px"></div>
<div class="a t" style="left:501px;top:548px;font-size:12.5px;color:#111;-webkit-text-stroke:0.2px #111">6</div>
<div class="a t" style="left:534px;top:547px;font-size:13px;color:#111;-webkit-text-stroke:0.2px #111">%</div>
<div class="a t" style="left:440px;top:570px;width:52px;text-align:right;font-size:12px;color:#111;-webkit-text-stroke:0.3px #111">K:</div>
<div class="a" style="left:497px;top:566px;width:32px;height:18px;background:#fff;border:1px solid #d6d6d6;border-top-color:#bcbcbc;border-radius:2px"></div>
<div class="a t" style="left:501px;top:570px;font-size:12.5px;color:#111;-webkit-text-stroke:0.2px #111">0</div>
<div class="a t" style="left:534px;top:569px;font-size:13px;color:#111;-webkit-text-stroke:0.2px #111">%</div>
<div class="a t" style="left:363px;top:574px;font-size:12px;color:#111;-webkit-text-stroke:0.3px #111">#</div>
<div class="a" style="left:375px;top:570px;width:75px;height:18px;background:#fff;border:1px solid #d6d6d6;border-top-color:#bcbcbc;border-radius:2px"></div>
<div class="a t" style="left:379px;top:574px;font-size:12.5px;color:#111;-webkit-text-stroke:0.2px #111"></div>
<div class="a" style="left:379px;top:573px;width:40px;height:13px;background:#3399ff"></div>
<div class="a t" style="left:379px;top:574px;font-size:12px;color:#fff">92bae0</div>
<div class="a" style="left:71px;top:574px;width:12px;height:12px;background:linear-gradient(135deg,#dcdcdc,#fbfbfb);border:1px solid #8e8f8f;box-shadow:inset 0 0 0 1px #f4f4f4"></div>
<div class="a t" style="left:86px;top:574px;font-size:12px;color:#111;-webkit-text-stroke:0.15px #111">只有 Web 颜色</div>
<svg class="a" style="left:344px;top:38px" width="26" height="26"><g stroke="#2a2a2a" stroke-width="0.8" stroke-linejoin="round"><path d="M5 4.5C3.2 7 3.3 10 6.3 12L9.8 15.5L11 15L8.9 11.2C9.3 8.5 7.6 6 5 4.5Z" fill="#cdcdcd"/><path d="M10.9 5.8C10.9 3.4 14.1 3.4 14.1 5.8C14.1 7.3 13.6 8.6 13.3 9.6V15.5H11.7V9.6C11.4 8.6 10.9 7.3 10.9 5.8Z" fill="#cdcdcd"/><path d="M14.6 9.8C15 7 17.8 5.2 21 6.6C21 9.2 19.2 11.3 16.6 11.5L14.3 15.5L13.2 15L15.4 11Z" fill="#cdcdcd"/><rect x="8.5" y="15" width="8.5" height="8" fill="#cdcdcd"/></g></svg>
<svg class="a" style="left:344px;top:66px" width="26" height="26"><g stroke="#2a2a2a" stroke-width="0.8" stroke-linejoin="round"><path d="M3.5 4.8C6 5.6 8 4.3 10.2 4.3C12.6 4.3 13.8 5.9 13.8 7.5C13.8 9.6 11.8 11 9.2 11C6.6 11 4.4 8.6 3.5 4.8Z" fill="#cdcdcd"/><rect x="13.2" y="6.6" width="9" height="2.6" fill="#cdcdcd"/><rect x="4.3" y="13.8" width="11" height="2.6" fill="#cdcdcd"/><path d="M14.8 15.1L21 10.6C23 13.4 23 18 21 20.8Z" fill="#cdcdcd"/></g></svg>
<svg class="a" style="left:344px;top:103px" width="26" height="26"><g stroke="#2a2a2a" stroke-width="0.8"><rect x="3.8" y="5.3" width="2.6" height="2.4" fill="#cdcdcd"/><rect x="3.8" y="8.3" width="2.6" height="2.4" fill="#cdcdcd"/><rect x="3.8" y="11.3" width="2.6" height="2.4" fill="#cdcdcd"/><rect x="7" y="5.7" width="4.8" height="1.6" fill="#cdcdcd"/><rect x="7" y="8.7" width="4.8" height="1.6" fill="#cdcdcd"/><rect x="7" y="11.7" width="4.8" height="1.6" fill="#cdcdcd"/><path d="M12.6 8.2C12.6 5.4 17.2 5.4 17.2 8.2C17.2 10.2 16.1 11.2 15.9 12.6V14.6H13.9V12.6C13.7 11.2 12.6 10.2 12.6 8.2Z" fill="#cdcdcd"/><rect x="7.8" y="14.4" width="13.4" height="4.8" fill="#cdcdcd"/><rect x="8.8" y="20" width="11.4" height="1.4" fill="#cdcdcd"/></g></svg>
<svg class="a" style="left:344px;top:142px" width="26" height="26"><g stroke="#2a2a2a" stroke-width="1.1" stroke-linejoin="round"><path d="M13 4.8L20.8 8.6V18L13 22L5.2 18V8.6Z" fill="#cdcdcd"/><path d="M5.5 8.8L13 12.4L20.5 8.8M13 12.4V21.7" fill="none"/></g><path d="M13 5.8L19 8.7L13 11.5L7 8.7Z" fill="#dadada"/></svg>
</div></body></html>
